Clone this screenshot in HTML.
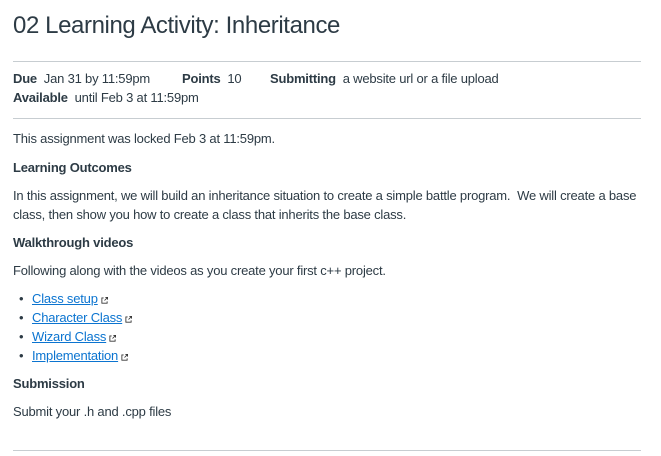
<!DOCTYPE html>
<html><head><meta charset="utf-8"><style>
body{margin:0;width:661px;height:456px;background:#fff;font-family:"Liberation Sans",sans-serif;color:#2d3b45;position:relative;overflow:hidden}
.t{position:absolute;left:13px;white-space:nowrap;font-size:13px;letter-spacing:-0.2px;line-height:16px}
b{font-weight:bold}
.hr{position:absolute;left:13px;width:628px;height:1px;background:#c7cdd1}
a{color:#0b74d0;text-decoration:underline}
.ext{display:inline-block;width:7px;height:7px;margin-left:3px;vertical-align:-1px}
.bl{position:absolute;left:19px;font-size:13px}
</style></head><body>
<div class="t" style="top:11px;font-size:24px;line-height:30px;letter-spacing:-0.4px">02 Learning Activity: Inheritance</div>
<div class="hr" style="top:61px"></div>
<div class="t" style="top:71px"><b>Due</b>&nbsp; Jan 31 by 11:59pm</div>
<div class="t" style="top:71px;left:182px"><b>Points</b>&nbsp; 10</div>
<div class="t" style="top:71px;left:270px"><b>Submitting</b>&nbsp; a website url or a file upload</div>
<div class="t" style="top:90px"><b>Available</b>&nbsp; until Feb 3 at 11:59pm</div>
<div class="hr" style="top:118px"></div>
<div class="t" style="top:131px">This assignment was locked Feb 3 at 11:59pm.</div>
<div class="t" style="top:160px"><b>Learning Outcomes</b></div>
<div class="t" style="top:188px">In this assignment, we will build an inheritance situation to create a simple battle program.&nbsp; We will create a base</div>
<div class="t" style="top:207px">class, then show you how to create a class that inherits the base class.</div>
<div class="t" style="top:235px"><b>Walkthrough videos</b></div>
<div class="t" style="top:263px">Following along with the videos as you create your first c++ project.</div>
<div class="bl" style="top:291px">•</div><div class="t" style="top:291px;left:32px"><a>Class setup</a><svg class="ext" viewBox="0 0 8 8"><path d="M3 1H1v6h6V5M4 4l3.5-3.5M5 0.5h2.5V3" fill="none" stroke="#333" stroke-width="1"/></svg></div>
<div class="bl" style="top:310px">•</div><div class="t" style="top:310px;left:32px"><a>Character Class</a><svg class="ext" viewBox="0 0 8 8"><path d="M3 1H1v6h6V5M4 4l3.5-3.5M5 0.5h2.5V3" fill="none" stroke="#333" stroke-width="1"/></svg></div>
<div class="bl" style="top:329px">•</div><div class="t" style="top:329px;left:32px"><a>Wizard Class</a><svg class="ext" viewBox="0 0 8 8"><path d="M3 1H1v6h6V5M4 4l3.5-3.5M5 0.5h2.5V3" fill="none" stroke="#333" stroke-width="1"/></svg></div>
<div class="bl" style="top:348px">•</div><div class="t" style="top:348px;left:32px"><a>Implementation</a><svg class="ext" viewBox="0 0 8 8"><path d="M3 1H1v6h6V5M4 4l3.5-3.5M5 0.5h2.5V3" fill="none" stroke="#333" stroke-width="1"/></svg></div>
<div class="t" style="top:376px"><b>Submission</b></div>
<div class="t" style="top:404px">Submit your .h and .cpp files</div>
<div class="hr" style="top:450px"></div>
</body></html>
